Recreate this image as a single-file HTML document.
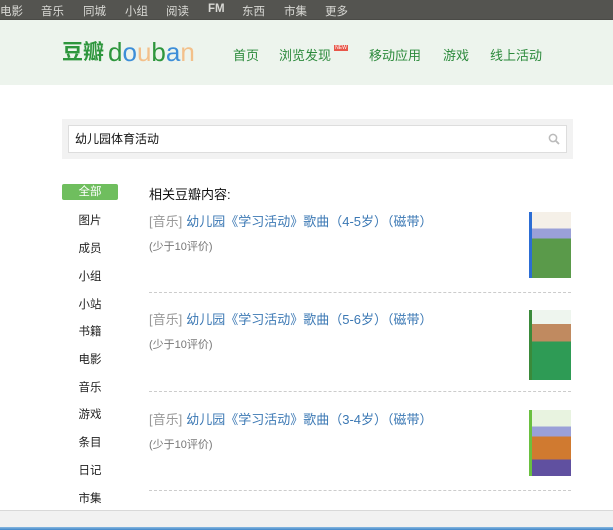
<!DOCTYPE html>
<html><head><meta charset="utf-8"><style>
*{margin:0;padding:0;box-sizing:border-box}
body{width:613px;height:530px;overflow:hidden;background:#fff;font-family:"Liberation Sans","Noto Sans CJK SC",sans-serif;position:relative}
.top{position:absolute;left:0;top:0;width:613px;height:20px;background:#545450;border-bottom:1px solid #4a4a46}
.top span{position:absolute;top:3px;font-size:11.5px;color:#d8d8d4}
.hd{position:absolute;left:0;top:20px;width:613px;height:65px;background:#edf4ed}
.logo{position:absolute;left:62px;top:36px;font-size:21px;font-weight:bold;color:#2e963d;letter-spacing:0}
.logo2{position:absolute;left:108px;top:37px;font-size:26px;font-family:"Liberation Sans",sans-serif}
.nav{position:absolute;top:45px;font-size:13px;color:#2c8a3c}
.new{position:absolute;left:334px;top:45px;width:14px;height:6px;background:#e8574a;font-size:5px;color:#fff;line-height:6px;text-align:center}
.sbox{position:absolute;left:62px;top:119px;width:511px;height:40px;background:#f2f2f2}
.sin{position:absolute;left:68px;top:125px;width:499px;height:28px;background:#fff;border:1px solid #ddd;font-size:12px;line-height:26px;padding-left:6px;color:#111}
.side{position:absolute;left:62px;width:56px;text-align:center;font-size:11.5px;color:#222}
.all{top:184px;height:16px;line-height:16px;background:#6fbe5e;color:#fff;border-radius:2px}
.h{position:absolute;left:149px;top:184px;font-size:13px;color:#111}
.t{position:absolute;left:149px;font-size:13px;color:#999}
.t b{font-weight:normal;color:#3b78b4;margin-left:4px}
.r{position:absolute;left:149px;font-size:11px;color:#777}
.dash{position:absolute;left:149px;width:422px;border-top:1px dashed #ccc}
.cov{position:absolute;left:529px;width:42px;height:66px;border-left:3px solid #2c6dd4;background:linear-gradient(#f5f0e8 0 25%,#9aa0d8 25% 40%,#5a9a4a 40% 100%)}
.cov2{border-left-color:#3a8a3a;background:linear-gradient(#eef5ee 0 20%,#c08a60 20% 45%,#2e9b55 45% 100%)}
.cov3{border-left-color:#6ac040;background:linear-gradient(#e8f3e0 0 25%,#9aa0d8 25% 40%,#d07a30 40% 75%,#6050a0 75% 100%)}
.gray{position:absolute;left:0;top:510px;width:613px;height:17px;background:#f1f1f1;border-top:1px solid #d8d8d8}
.task{position:absolute;left:0;top:527px;width:613px;height:3px;background:linear-gradient(#8ab8e0,#3f86c8)}
</style></head><body>
<div class="top">
<span style="left:0">电影</span><span style="left:41px">音乐</span><span style="left:83px">同城</span><span style="left:125px">小组</span><span style="left:166px">阅读</span><span style="left:208px;font-weight:bold">FM</span><span style="left:242px">东西</span><span style="left:284px">市集</span><span style="left:325px">更多</span>
</div>
<div class="hd"></div>
<div class="logo">豆瓣</div>
<div class="logo2"><span style="color:#2e963d">d</span><span style="color:#3d8ed8">o</span><span style="color:#f3c08a">u</span><span style="color:#2e963d">b</span><span style="color:#3d8ed8">a</span><span style="color:#f3c08a">n</span></div>
<div class="nav" style="left:233px">首页</div>
<div class="nav" style="left:279px">浏览发现</div>
<div class="new">NEW</div>
<div class="nav" style="left:369px">移动应用</div>
<div class="nav" style="left:443px">游戏</div>
<div class="nav" style="left:490px">线上活动</div>
<div class="sbox"></div>
<div class="sin">幼儿园体育活动</div>
<svg style="position:absolute;left:548px;top:133px" width="12" height="12" viewBox="0 0 12 12"><circle cx="5" cy="5" r="3.6" fill="none" stroke="#bbb" stroke-width="1.5"/><path d="M7.6 7.6L11 11" stroke="#bbb" stroke-width="1.8"/></svg>
<div class="side all">全部</div>
<div class="side" style="top:212px">图片</div>
<div class="side" style="top:240px">成员</div>
<div class="side" style="top:268px">小组</div>
<div class="side" style="top:296px">小站</div>
<div class="side" style="top:323px">书籍</div>
<div class="side" style="top:351px">电影</div>
<div class="side" style="top:379px">音乐</div>
<div class="side" style="top:406px">游戏</div>
<div class="side" style="top:434px">条目</div>
<div class="side" style="top:462px">日记</div>
<div class="side" style="top:490px">市集</div>
<div class="h">相关豆瓣内容:</div>
<div class="t" style="top:211px">[音乐]<b>幼儿园《学习活动》歌曲（4-5岁）（磁带）</b></div>
<div class="r" style="top:238px">(少于10评价)</div>
<div class="dash" style="top:292px"></div>
<div class="cov" style="top:212px"></div>
<div class="t" style="top:309px">[音乐]<b>幼儿园《学习活动》歌曲（5-6岁）（磁带）</b></div>
<div class="r" style="top:336px">(少于10评价)</div>
<div class="dash" style="top:391px"></div>
<div class="cov cov2" style="top:310px;height:70px"></div>
<div class="t" style="top:409px">[音乐]<b>幼儿园《学习活动》歌曲（3-4岁）（磁带）</b></div>
<div class="r" style="top:436px">(少于10评价)</div>
<div class="dash" style="top:490px"></div>
<div class="cov cov3" style="top:410px"></div>
<div class="gray"></div>
<div class="task"></div>
</body></html>
